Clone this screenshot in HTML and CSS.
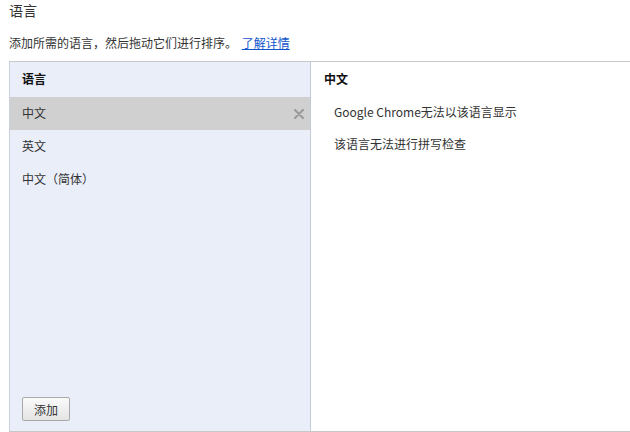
FILE: index.html
```html
<!DOCTYPE html>
<html lang="zh-CN">
<head>
    <meta charset="UTF-8">
    <title>语言</title>
    <link rel="stylesheet" href="styles.css">
</head>
<body>
    <div class="page">
        <h1 class="title">语言</h1>
        <p class="intro">添加所需的语言，然后拖动它们进行排序。 <a href="#" class="learn">了解详情</a></p>

        <div class="lang-box">
            <div class="lang-list">
                <div class="list-head">语言</div>
                <div class="lang-item selected">
                    <span>中文</span>
                    <svg class="remove" width="10" height="10" viewBox="0 0 10 10">
                        <path d="M1 1 9 9M9 1 1 9" stroke="#9c9c9c" stroke-width="2.2" stroke-linecap="round"/>
                    </svg>
                </div>
                <div class="lang-item"><span>英文</span></div>
                <div class="lang-item"><span>中文（简体）</span></div>
                <div class="list-foot">
                    <button class="add-btn">添加</button>
                </div>
            </div>
            <div class="lang-detail">
                <div class="detail-head">中文</div>
                <div class="detail-line">Google Chrome无法以该语言显示</div>
                <div class="detail-line">该语言无法进行拼写检查</div>
            </div>
        </div>
    </div>
</body>
</html>
```

FILE: styles.css
```css
* {
    margin: 0;
    padding: 0;
    box-sizing: border-box;
}

body {
    font-family: "Noto Sans CJK SC", "Liberation Sans", sans-serif;
    font-size: 12px;
    color: #303030;
    background: #fff;
}

.page {
    padding-left: 9px;
    height: 432px;
    display: flex;
    flex-direction: column;
}

.title {
    font-size: 14px;
    font-weight: normal;
    line-height: 20px;
    color: #333;
}

.intro {
    margin-top: 13px;
    line-height: 20px;
    color: #333;
}

.learn {
    color: #1155cc;
    margin-left: 2px;
}

.lang-box {
    margin-top: 8px;
    flex: 1;
    display: flex;
    border-top: 1px solid #c8c8c8;
    border-bottom: 1px solid #c8c8c8;
}

.lang-list {
    width: 302px;
    background: #eaeef9;
    border-left: 1px solid #c9cfdc;
    border-right: 1px solid #c3cad8;
    display: flex;
    flex-direction: column;
}

.list-head {
    height: 35px;
    line-height: 34px;
    padding-left: 12px;
    font-weight: bold;
    color: #111;
}

.lang-item {
    height: 33px;
    display: flex;
    align-items: center;
    justify-content: space-between;
    padding-left: 12px;
    padding-right: 6px;
    padding-bottom: 2px;
    color: #333;
}

.lang-item.selected {
    background: #d0d0d0;
}

.remove {
    margin-top: 2px;
}

.list-foot {
    margin-top: auto;
    padding: 0 0 10px 12px;
}

.add-btn {
    width: 48px;
    height: 24px;
    font-family: inherit;
    font-size: 12px;
    color: #333;
    border: 1px solid #a9a9a9;
    border-radius: 2px;
    background: linear-gradient(#fafafa, #e4e4e4);
}

.lang-detail {
    flex: 1;
    background: #fff;
}

.detail-head {
    height: 35px;
    line-height: 34px;
    padding-left: 13px;
    font-weight: bold;
    color: #111;
}

.detail-line {
    height: 32px;
    line-height: 30px;
    padding-left: 23px;
    color: #333;
}
```
